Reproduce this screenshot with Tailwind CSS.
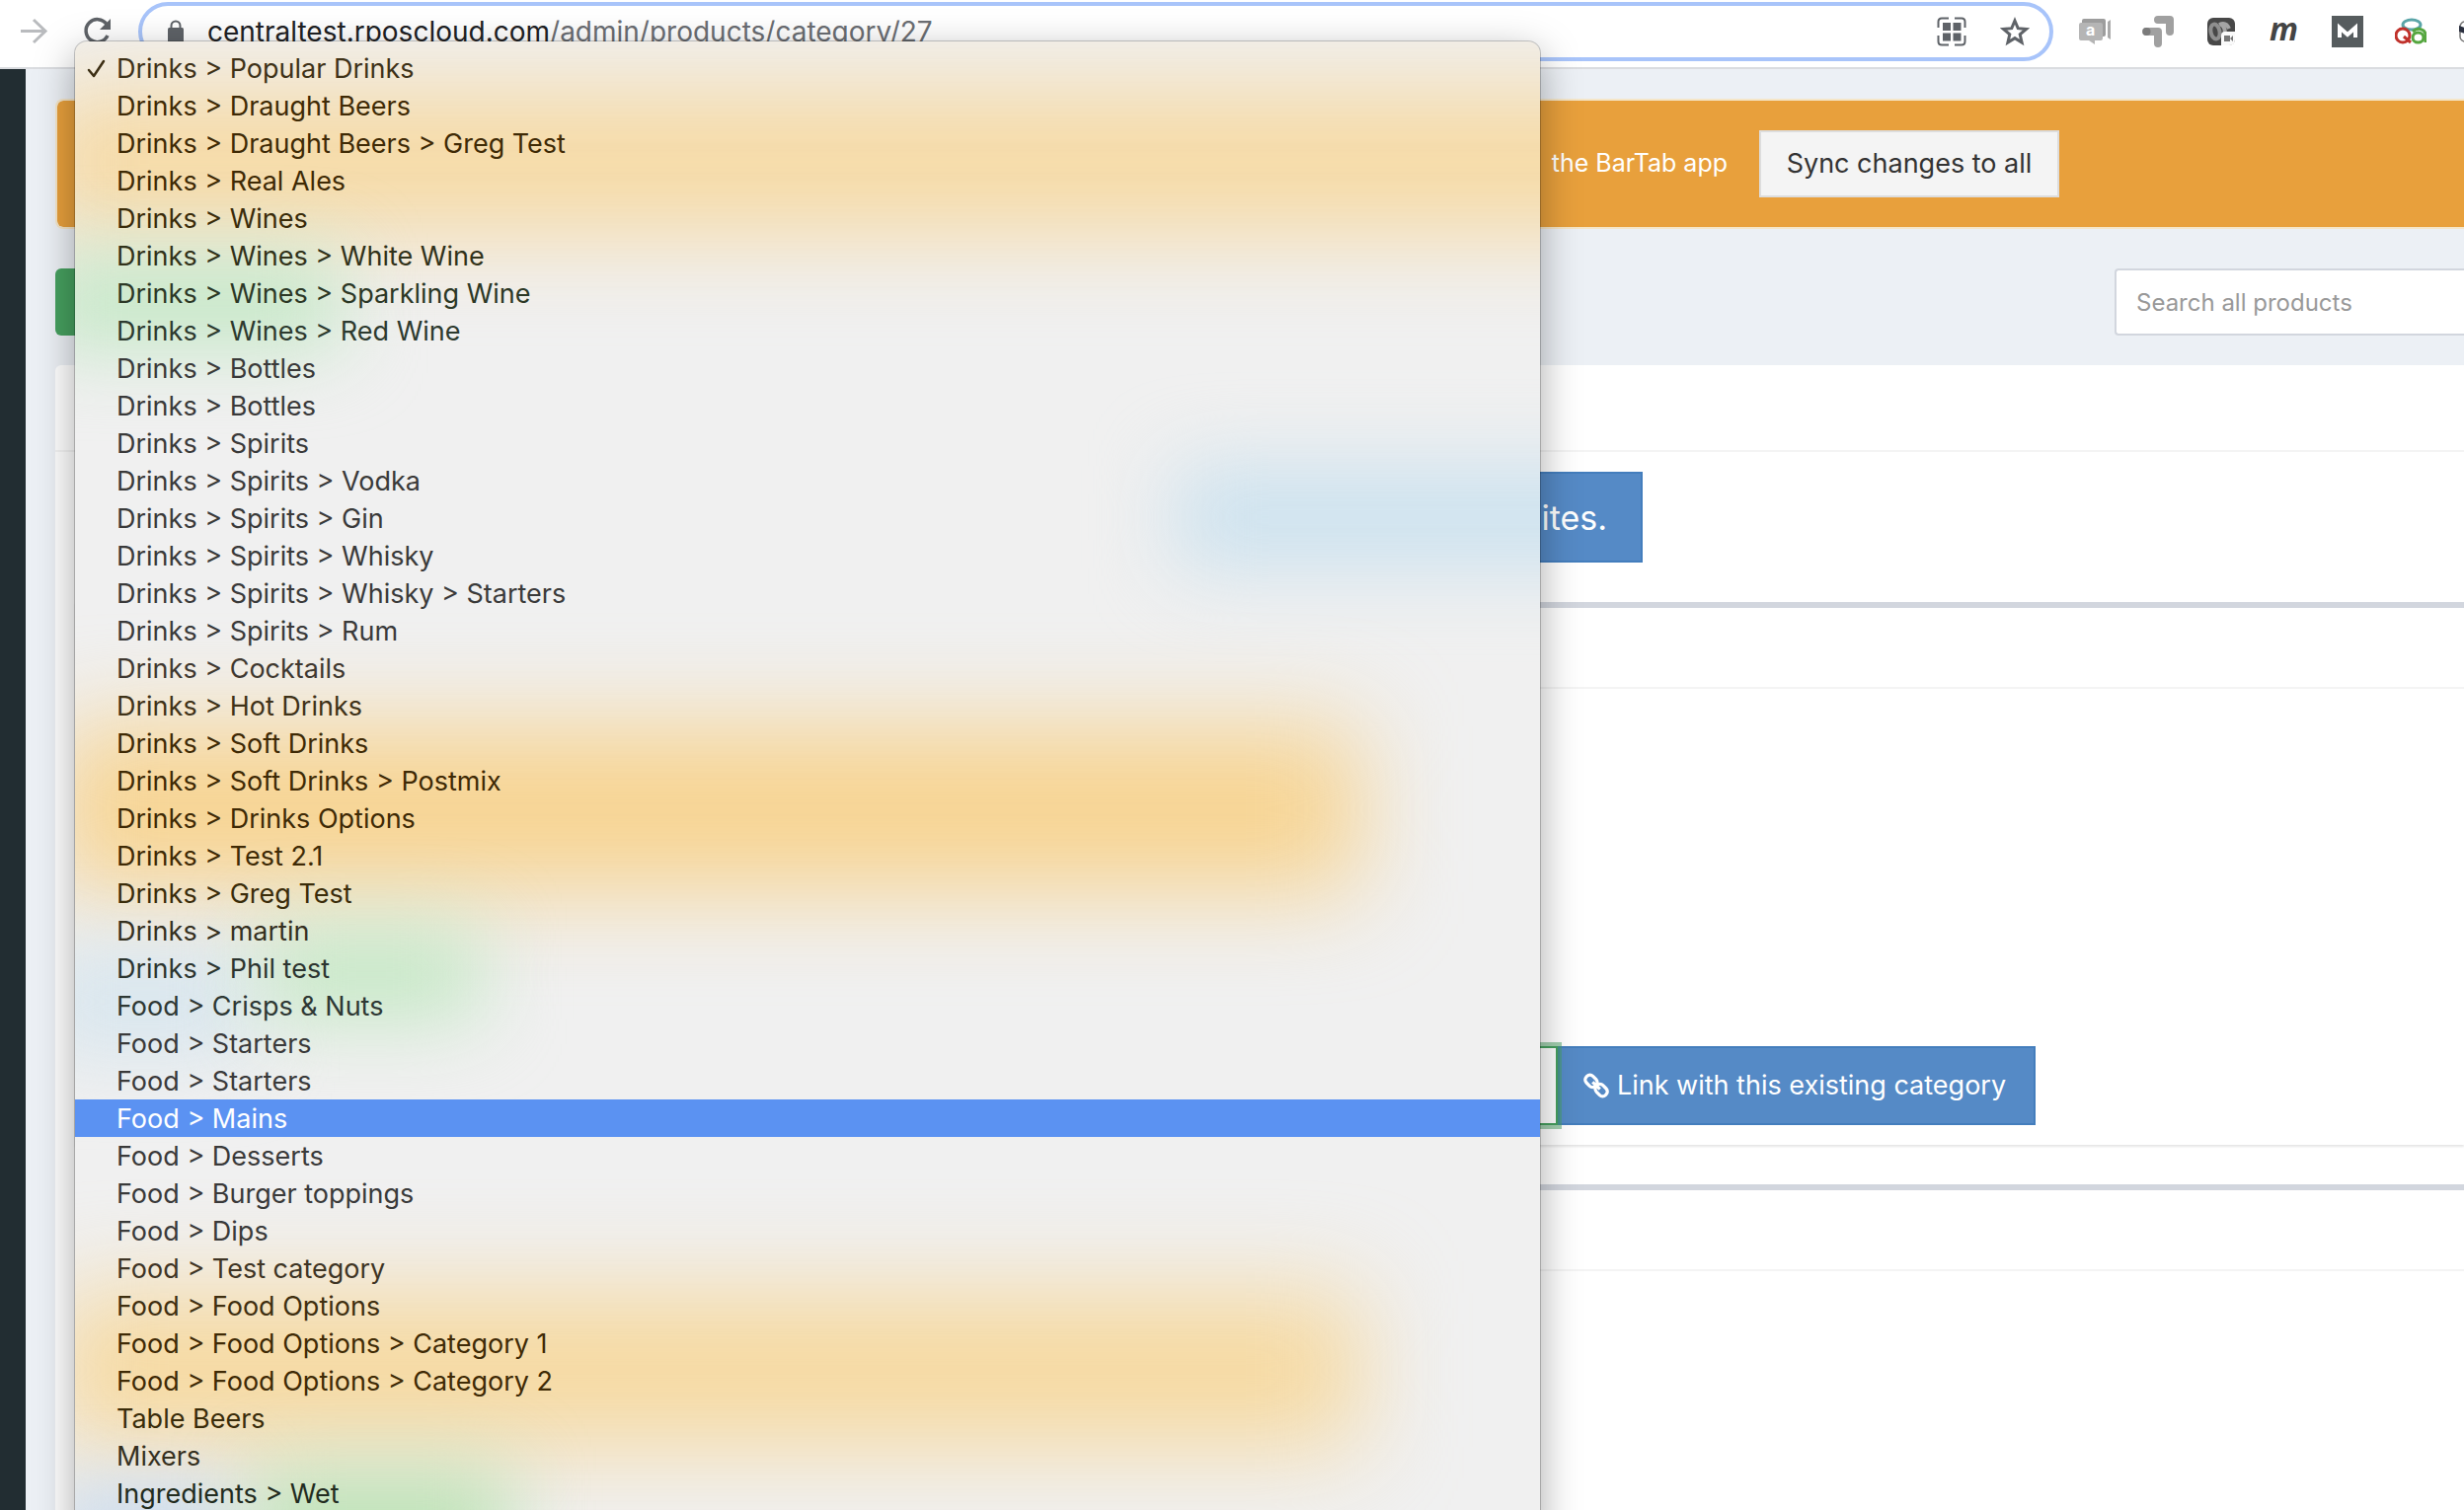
<!DOCTYPE html>
<html lang="en">
<head>
    <meta charset="UTF-8">
    <meta name="viewport" content="width=device-width, initial-scale=1.0">
    <script src="https://cdn.jsdelivr.net/npm/@tailwindcss/browser@4"></script>
    <title>Product categories</title>
</head>
<body class="font-[Inter,sans-serif] bg-[#ecf0f5] text-[#333]">
    <div class="relative flex flex-col h-screen overflow-hidden">
        <!-- Browser toolbar -->
        <header class="flex shrink-0 h-[70px] bg-white border-b-2 border-[#dadce0]">
            <div class="flex items-start gap-8 w-[140px] shrink-0 pl-[18px] pt-4">
                <button type="button" aria-label="Forward">
                    <svg class="size-8" viewBox="0 0 32 32" fill="none" stroke="#b9bbbe" stroke-width="3"><path d="M3 15.500h24M16 4l12 11.500L16 27" /></svg>
                </button>
                <button type="button" aria-label="Reload">
                    <svg class="size-8" viewBox="0 0 32 32"><path d="M26 8.500A11.500 11.500 0 1 0 27 20" fill="none" stroke="#5f6368" stroke-width="3.500" /><path d="M30 3v11H19z" fill="#5f6368" /></svg>
                </button>
            </div>
            <div class="flex flex-1 items-center h-[60px] mt-0.5 pl-[26px] pr-5 bg-white border-4 border-[#a8c4fa] rounded-full">
                <svg class="w-4 h-6 shrink-0" viewBox="0 0 16 24"><path d="M3.500 9V6a4.500 4.500 0 0 1 9 0v3" fill="none" stroke="#5f6368" stroke-width="2" /><rect y="8" width="16" height="15" rx="1.500" fill="#5f6368" /></svg>
                <span class="flex-1 ml-6 text-[28px] text-[#202124]">centraltest.rposcloud.com<span class="text-[#6b6e73]">/admin/products/category/27</span></span>
                <button type="button" aria-label="QR code">
                    <svg class="size-[30px]" viewBox="0 0 30 30"><path d="M1.500 11V5q0-3.500 3.500-3.500h7M18 1.500h7q3.500 0 3.500 3.500v6M28.500 19v6q0 3.500-3.500 3.500h-7M12 28.500H5q-3.500 0-3.500-3.500v-6" fill="none" stroke="#5f6368" stroke-width="2" /><path d="M6 6h8v8H6zM16.500 6h8v8h-8zM6 16.500h8v8H6zM16.500 16.500h8v8h-8z" fill="#5f6368" /></svg>
                </button>
                <button type="button" class="ml-[34px]" aria-label="Bookmark">
                    <svg class="size-[30px]" viewBox="0 0 30 30"><path d="M15 4l3.200 7.700 8.300.7-6.300 5.400 1.900 8.200-7.100-4.400L7.900 26l1.900-8.200-6.300-5.400 8.300-.7z" fill="none" stroke="#5f6368" stroke-width="3" /></svg>
                </button>
            </div>
            <!-- Extensions -->
            <div class="flex gap-8 w-[416px] shrink-0 pl-[26px] pt-4 overflow-hidden">
                <svg class="size-8 shrink-0" viewBox="0 0 32 32"><path d="M5 3h20q2 0 2 2v14q0 2-2 2H5q-2 0-2-2V5q0-2 2-2z" fill="#9d9d9d" /><path d="M2 7h20q2 0 2 2v14q0 2-2 2h-6v4l-6-4H2q-2 0-2-2V9q0-2 2-2z" fill="#b5b5b5" /><path d="M29 6l3-2v20l-3-2z" fill="#aaa" /><text x="7" y="20" font-family="Inter" font-size="16" font-weight="700" fill="#fff">a</text></svg>
                <svg class="size-8 shrink-0" viewBox="0 0 32 32" fill="none" stroke="#a0a0a0" stroke-width="8" stroke-linecap="round" stroke-linejoin="round"><path d="M16 4h12v12M4 16h12v12" /><circle cx="4.500" cy="16" r="4" fill="#7b7b7b" stroke="none" /></svg>
                <svg class="size-8 shrink-0" viewBox="0 0 32 32"><rect x="2" y="2" width="28" height="28" rx="6" fill="#484848" /><ellipse cx="10" cy="16" rx="4.500" ry="7.500" transform="rotate(-12 10 16)" fill="none" stroke="#8f8f8f" stroke-width="4" /><path d="M14 9q7-3 10 4M16 9q4 2 4 9" fill="none" stroke="#a5a5a5" stroke-width="4" /><path d="M20 16h10v8q0 6-6 6h-8V20q0-4 4-4z" fill="#fafafa" /><path d="M19 20h6v6h-6zM25 23l3-3v6z" fill="#777" /></svg>
                <svg class="size-8 shrink-0 overflow-visible" viewBox="0 0 32 32"><text x="1" y="25" font-family="Open Sans" font-size="32" font-weight="700" font-style="italic" fill="#444">m</text></svg>
                <svg class="size-8 shrink-0" viewBox="0 0 32 32"><path d="M0 0h32v32H0z" fill="#565c5e" /><path d="M8 22V12l8 7 8-7v10" fill="none" stroke="#fff" stroke-width="4" /></svg>
                <svg class="size-8 shrink-0" viewBox="0 0 32 32" fill="none" stroke-width="3"><ellipse cx="17" cy="9" rx="9" ry="5" stroke="#5aa5a8" /><circle cx="8" cy="20" r="7" stroke="#c0312b" /><path d="M9 21l7 6" stroke="#c0312b" /><ellipse cx="23.500" cy="22" rx="5.500" ry="5" stroke="#55a63f" /><path d="M18 16q5-4 9-2 4 1 4 6v7" stroke="#55a63f" /></svg>
                <svg class="size-8 shrink-0" viewBox="0 0 32 32"><rect x="2" y="6" width="28" height="20" rx="5" fill="#fff" stroke="#777" stroke-width="1.500" /><path d="M1 10l30 10v6L1 16z" fill="#2b3040" /></svg>
            </div>
        </header>

        <div class="flex flex-1 min-h-0">
            <aside class="w-[26px] shrink-0 bg-[#222d32]"></aside>

            <main class="flex-1 min-w-0 pl-[30px] pt-[30px]">
                <!-- Sync notice -->
                <div class="flex items-center h-[132px] border-2 border-r-0 border-[#f5e6c8] rounded-l-lg bg-[#e8a03c] bg-clip-padding">
                    <p class="w-[1692px] text-right text-[25px] text-white">the BarTab app</p>
                    <button type="button" class="w-[304px] h-[68px] ml-8 bg-[#f4f4f4] border-2 border-[#ddd] text-[27px]">Sync changes to all</button>
                </div>

                <div class="flex justify-between mt-10">
                    <button type="button" aria-label="Add product" class="w-[300px] h-[68px] rounded-md bg-[#46a05f]"></button>
                    <input type="search" aria-label="Search all products" placeholder="Search all products" class="w-[354px] h-[68px] pl-5 bg-white border-2 border-r-0 border-[#d2d6de] rounded-l-sm text-2xl placeholder:text-[#999]">
                </div>

                <section class="mt-[30px] pl-5 bg-white rounded-tl-md">
                    <div class="h-[88px] -ml-5 border-b-2 border-[#f4f4f4]"></div>
                    <button type="button" class="block w-[490px] h-[92px] mt-5 ml-[1098px] pr-[34px] bg-[#558ac6] border-2 border-[#447ebd] text-right text-[34px] text-white">ites.</button>

                    <div class="mt-10 border-t-[6px] border-[#d2d6de] shadow-[0_2px_2px_rgba(0,0,0,0.1)]">
                        <div class="h-[82px] border-b-2 border-[#f4f4f4]"></div>
                        <form class="flex items-end h-[462px] pl-5 pb-5">
                            <input type="text" aria-label="Category" class="relative w-[1482px] h-20 bg-white border-2 border-[#46a05f] shadow-[0_0_0_4px_rgba(70,160,95,0.5)]">
                            <button type="button" class="flex items-center justify-center gap-2 w-[484px] h-20 pr-1 bg-[#558ac6] border-2 border-[#447ebd] text-[27px] text-white">
                                <svg class="size-[26px]" viewBox="0 0 28 28" fill="none" stroke="#fff" stroke-width="3.500"><rect x="1.500" y="4" width="14" height="10" rx="4.500" transform="rotate(45 8.500 9)" /><rect x="12.500" y="14" width="14" height="10" rx="4.500" transform="rotate(45 19.500 19)" /><path d="M10 10l8 8" /></svg>
                                Link with this existing category
                            </button>
                        </form>
                    </div>

                    <div class="mt-10 border-t-[6px] border-[#d2d6de]">
                        <div class="h-[82px] border-b-2 border-[#f4f4f4]"></div>
                        <div class="h-[300px]"></div>
                    </div>
                </section>
            </main>
        </div>

        <!-- Category menu, open over the page -->
        <div class="absolute left-[76px] top-[42px] w-[1484px] h-[1520px] pt-2 rounded-t-xl bg-[#f0f0f0] shadow-[0_0_0_1px_rgba(0,0,0,0.2),0_12px_40px_rgba(0,0,0,0.35)]">
            <!-- Page colours showing through -->
            <div class="absolute inset-0 overflow-hidden rounded-t-xl" aria-hidden="true">
                <div class="absolute -left-10 top-[50px] w-[1640px] h-[144px] bg-[#f6d9a2] blur-[48px]"></div>
                <div class="absolute -left-10 top-[220px] w-[310px] h-[90px] bg-[#c4e8c6] blur-[40px]"></div>
                <div class="absolute left-[1114px] top-[430px] w-[490px] h-[104px] bg-[#cce2ef] blur-[40px]"></div>
                <div class="absolute -left-5 top-[694px] w-[1321px] h-[168px] bg-[#f7d492] blur-[48px]"></div>
                <div class="absolute -left-10 top-[918px] w-[220px] h-[110px] bg-[#d8e6ee] blur-[40px]"></div>
                <div class="absolute left-[190px] top-[900px] w-[220px] h-[90px] bg-[#c4e8c4] blur-[40px]"></div>
                <div class="absolute -left-5 top-[1268px] w-[1321px] h-[156px] bg-[#f6d9a0] blur-[48px]"></div>
                <div class="absolute -left-5 top-[1460px] w-[180px] h-[100px] bg-[#cddcec] blur-[36px]"></div>
                <div class="absolute left-[180px] top-[1450px] w-[260px] h-[110px] bg-[#bce2b4] blur-[40px]"></div>
            </div>
            <svg class="absolute left-3 top-[18px] w-[20px] h-[20px]" viewBox="0 0 20 20" fill="none" stroke="#3d2f14" stroke-width="2.500" stroke-linecap="round" stroke-linejoin="round"><path d="M2 11l5 6L17 2" /></svg>
            <select size="39" aria-label="Category to link" class="relative block w-full h-[1482px] overflow-hidden text-[27px] leading-[36px] text-[#3a3a3a] outline-none">
                <option class="h-[38px] pt-[3px] pb-0 pl-[42px] text-[#3f3218]">Drinks &gt; Popular Drinks</option>
                <option class="h-[38px] pt-[3px] pb-0 pl-[42px] text-[#3f2a05]">Drinks &gt; Draught Beers</option>
                <option class="h-[38px] pt-[3px] pb-0 pl-[42px] text-[#3f2a05]">Drinks &gt; Draught Beers &gt; Greg Test</option>
                <option class="h-[38px] pt-[3px] pb-0 pl-[42px] text-[#3f2a05]">Drinks &gt; Real Ales</option>
                <option class="h-[38px] pt-[3px] pb-0 pl-[42px] text-[#3a2c0a]">Drinks &gt; Wines</option>
                <option class="h-[38px] pt-[3px] pb-0 pl-[42px] text-[#31321a]">Drinks &gt; Wines &gt; White Wine</option>
                <option class="h-[38px] pt-[3px] pb-0 pl-[42px] text-[#2c3826]">Drinks &gt; Wines &gt; Sparkling Wine</option>
                <option class="h-[38px] pt-[3px] pb-0 pl-[42px] text-[#2d3a2f]">Drinks &gt; Wines &gt; Red Wine</option>
                <option class="h-[38px] pt-[3px] pb-0 pl-[42px]">Drinks &gt; Bottles</option>
                <option class="h-[38px] pt-[3px] pb-0 pl-[42px]">Drinks &gt; Bottles</option>
                <option class="h-[38px] pt-[3px] pb-0 pl-[42px]">Drinks &gt; Spirits</option>
                <option class="h-[38px] pt-[3px] pb-0 pl-[42px]">Drinks &gt; Spirits &gt; Vodka</option>
                <option class="h-[38px] pt-[3px] pb-0 pl-[42px]">Drinks &gt; Spirits &gt; Gin</option>
                <option class="h-[38px] pt-[3px] pb-0 pl-[42px]">Drinks &gt; Spirits &gt; Whisky</option>
                <option class="h-[38px] pt-[3px] pb-0 pl-[42px]">Drinks &gt; Spirits &gt; Whisky &gt; Starters</option>
                <option class="h-[38px] pt-[3px] pb-0 pl-[42px]">Drinks &gt; Spirits &gt; Rum</option>
                <option class="h-[38px] pt-[3px] pb-0 pl-[42px] text-[#3f3830]">Drinks &gt; Cocktails</option>
                <option class="h-[38px] pt-[3px] pb-0 pl-[42px] text-[#3f3218]">Drinks &gt; Hot Drinks</option>
                <option class="h-[38px] pt-[3px] pb-0 pl-[42px] text-[#3f2a05]">Drinks &gt; Soft Drinks</option>
                <option class="h-[38px] pt-[3px] pb-0 pl-[42px] text-[#3f2a05]">Drinks &gt; Soft Drinks &gt; Postmix</option>
                <option class="h-[38px] pt-[3px] pb-0 pl-[42px] text-[#3f2a05]">Drinks &gt; Drinks Options</option>
                <option class="h-[38px] pt-[3px] pb-0 pl-[42px] text-[#3f2a05]">Drinks &gt; Test 2.1</option>
                <option class="h-[38px] pt-[3px] pb-0 pl-[42px] text-[#3a2c0a]">Drinks &gt; Greg Test</option>
                <option class="h-[38px] pt-[3px] pb-0 pl-[42px] text-[#35301f]">Drinks &gt; martin</option>
                <option class="h-[38px] pt-[3px] pb-0 pl-[42px] text-[#2c3530]">Drinks &gt; Phil test</option>
                <option class="h-[38px] pt-[3px] pb-0 pl-[42px] text-[#2e3834]">Food &gt; Crisps &amp; Nuts</option>
                <option class="h-[38px] pt-[3px] pb-0 pl-[42px]">Food &gt; Starters</option>
                <option class="h-[38px] pt-[3px] pb-0 pl-[42px]">Food &gt; Starters</option>
                <option class="h-[38px] pt-[3px] pb-0 pl-[42px] bg-[#5b92f2] text-white">Food &gt; Mains</option>
                <option class="h-[38px] pt-[3px] pb-0 pl-[42px]">Food &gt; Desserts</option>
                <option class="h-[38px] pt-[3px] pb-0 pl-[42px]">Food &gt; Burger toppings</option>
                <option class="h-[38px] pt-[3px] pb-0 pl-[42px]">Food &gt; Dips</option>
                <option class="h-[38px] pt-[3px] pb-0 pl-[42px] text-[#3f3525]">Food &gt; Test category</option>
                <option class="h-[38px] pt-[3px] pb-0 pl-[42px] text-[#3f2f10]">Food &gt; Food Options</option>
                <option class="h-[38px] pt-[3px] pb-0 pl-[42px] text-[#3f2a05]">Food &gt; Food Options &gt; Category 1</option>
                <option class="h-[38px] pt-[3px] pb-0 pl-[42px] text-[#3f2a05]">Food &gt; Food Options &gt; Category 2</option>
                <option class="h-[38px] pt-[3px] pb-0 pl-[42px] text-[#3a2c0a]">Table Beers</option>
                <option class="h-[38px] pt-[3px] pb-0 pl-[42px] text-[#35301f]">Mixers</option>
                <option class="h-[38px] pt-[3px] pb-0 pl-[42px] text-[#222c20]">Ingredients &gt; Wet</option>
            </select>
        </div>
    </div>
</body>
</html>
